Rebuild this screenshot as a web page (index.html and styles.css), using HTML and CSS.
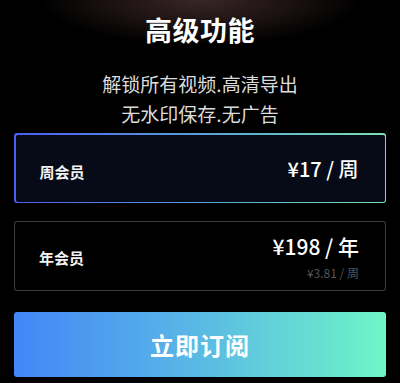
FILE: index.html
```html
<!DOCTYPE html>
<html lang="zh">

<head>
  <meta charset="UTF-8">
  <meta name="viewport" content="width=device-width, initial-scale=1.0">
  <title>高级功能</title>
  <link rel="stylesheet" href="styles.css">
</head>

<body>
  <div class="page">
    <h1 class="title">高级功能</h1>
    <p class="subtitle">解锁所有视频.高清导出<br>无水印保存.无广告</p>

    <div class="plan plan-active">
      <div class="plan-inner">
        <span class="plan-name">周会员</span>
        <span class="plan-price">¥17 / 周</span>
      </div>
    </div>

    <div class="plan">
      <div class="plan-inner">
        <span class="plan-name">年会员</span>
        <div class="plan-right">
          <span class="plan-price big">¥198 / 年</span>
          <span class="plan-note">¥3.81 / 周</span>
        </div>
      </div>
    </div>

    <button class="subscribe">立即订阅</button>
  </div>
</body>

</html>
```

FILE: styles.css
```css
html,
body {
  margin: 0;
  height: 100%;
}

body {
  background: #000;
  font-family: "Noto Sans CJK SC", "Noto Sans", sans-serif;
  color: #fff;
}

.page {
  height: 383px;
  padding: 0 14px;
  box-sizing: border-box;
  overflow: hidden;
  background: radial-gradient(ellipse 160px 45px at 200px 0, #3a2626 0%, #1c1212 55%, #000 100%);
}

.title {
  margin: 0;
  padding-top: 11px;
  font-size: 27px;
  font-weight: 700;
  line-height: 38px;
  text-align: center;
  letter-spacing: 0.5px;
}

.subtitle {
  margin: 20px 0 0;
  font-size: 19px;
  line-height: 30px;
  color: #dcdcdc;
  text-align: center;
}

.plan {
  margin-top: 4px;
  height: 70px;
  padding: 1px;
  border-radius: 3px;
  background: #3c3c3c;
  box-sizing: border-box;
}

.plan + .plan {
  margin-top: 18px;
}

.plan-active {
  padding: 1.5px;
  background: linear-gradient(90deg, #4a5ef0, #5aa0d8 50%, #7ce0b0);
}

.plan-inner {
  height: 100%;
  display: flex;
  align-items: center;
  justify-content: space-between;
  padding: 0 26px 0 24px;
  border-radius: 2px;
  background: #000;
  box-sizing: border-box;
}

.plan-active .plan-inner {
  background: #060b17;
}

.plan-name {
  font-size: 15px;
  font-weight: 700;
  color: #f2f2f2;
}

.plan-active .plan-name {
  margin-top: 6px;
}

.plan:not(.plan-active) .plan-name {
  margin-top: 2px;
}

.plan-price {
  font-size: 20px;
  font-weight: 500;
  color: #fff;
}

.plan-right {
  display: flex;
  flex-direction: column;
  align-items: flex-end;
  margin-top: 2px;
}

.plan-price.big {
  font-size: 21px;
  line-height: 28px;
}

.plan-note {
  margin-top: 4px;
  font-size: 12px;
  line-height: 18px;
  color: #555;
}

.subscribe {
  display: block;
  width: 100%;
  height: 65px;
  margin-top: 21px;
  border: none;
  border-radius: 3px;
  background: linear-gradient(90deg, #4386f7, #58b4e6 45%, #6ef5c8);
  color: #fff;
  font-family: inherit;
  font-size: 24px;
  font-weight: 700;
  letter-spacing: 1px;
  cursor: pointer;
}
```
